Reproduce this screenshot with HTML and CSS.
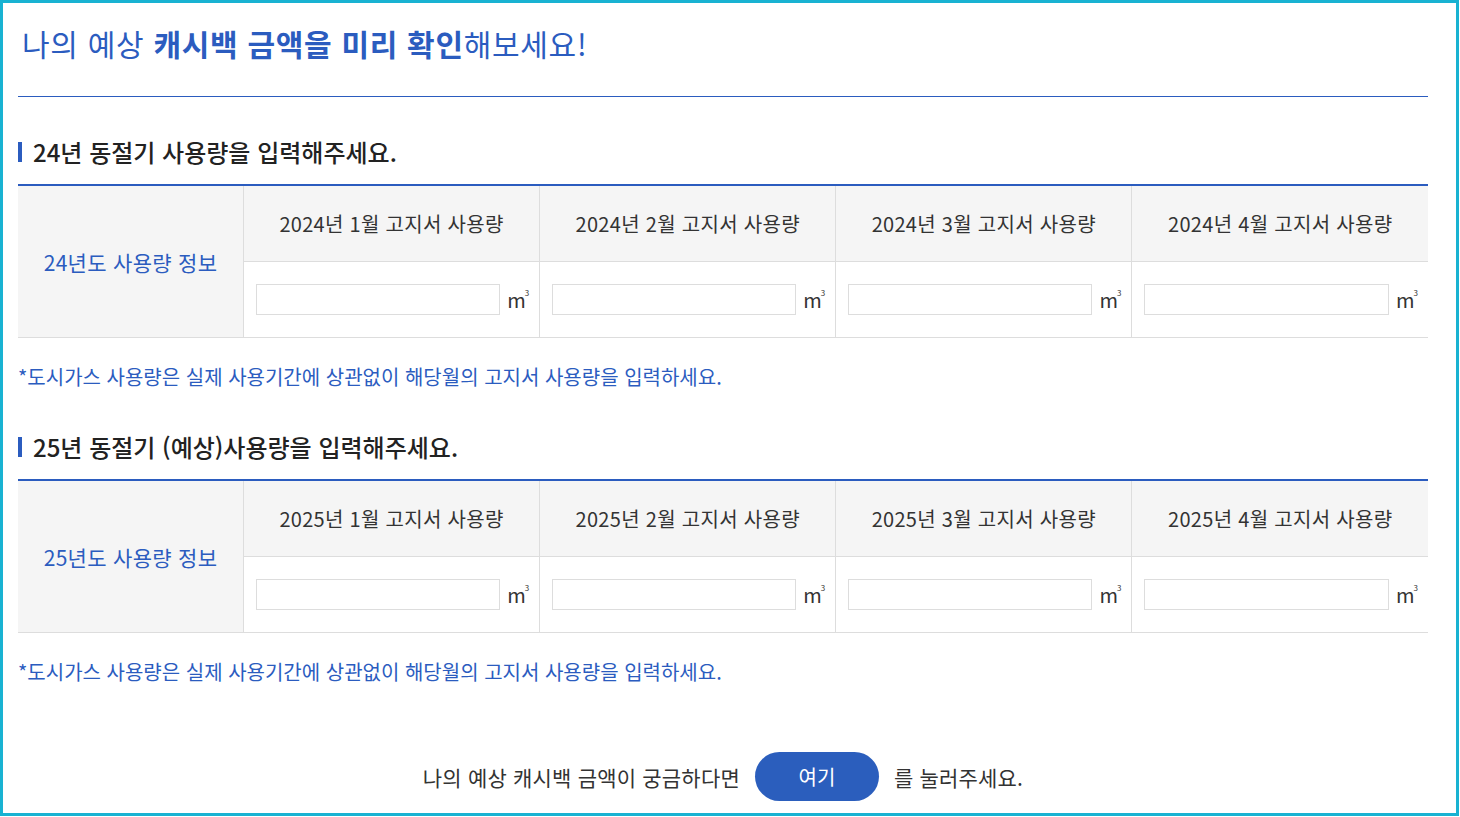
FILE: index.html
```html
<!DOCTYPE html>
<html lang="ko">
<head>
  <meta charset="UTF-8">
  <meta name="viewport" content="width=device-width, initial-scale=1.0">
  <title>예상 캐시백 확인</title>
  <link rel="stylesheet" href="styles.css">
</head>
<body>

  <div class="frame">
    <div class="title-box">
      <h1>나의 예상 <strong>캐시백 금액을 미리 확인</strong>해보세요!</h1>
    </div>

    <h2 class="sec-title">24년 동절기 사용량을 입력해주세요.</h2>
    <table class="usage-table">
      <tr>
        <th class="year-cell" rowspan="2">24년도 사용량 정보</th>
        <th>2024년 1월 고지서 사용량</th>
        <th>2024년 2월 고지서 사용량</th>
        <th>2024년 3월 고지서 사용량</th>
        <th>2024년 4월 고지서 사용량</th>
      </tr>
      <tr>
        <td><div class="field"><input type="text"><span class="unit">m<sup>3</sup></span></div></td>
        <td><div class="field"><input type="text"><span class="unit">m<sup>3</sup></span></div></td>
        <td><div class="field"><input type="text"><span class="unit">m<sup>3</sup></span></div></td>
        <td><div class="field"><input type="text"><span class="unit">m<sup>3</sup></span></div></td>
      </tr>
    </table>
    <p class="note">*도시가스 사용량은 실제 사용기간에 상관없이 해당월의 고지서 사용량을 입력하세요.</p>

    <h2 class="sec-title">25년 동절기 (예상)사용량을 입력해주세요.</h2>
    <table class="usage-table">
      <tr>
        <th class="year-cell" rowspan="2">25년도 사용량 정보</th>
        <th>2025년 1월 고지서 사용량</th>
        <th>2025년 2월 고지서 사용량</th>
        <th>2025년 3월 고지서 사용량</th>
        <th>2025년 4월 고지서 사용량</th>
      </tr>
      <tr>
        <td><div class="field"><input type="text"><span class="unit">m<sup>3</sup></span></div></td>
        <td><div class="field"><input type="text"><span class="unit">m<sup>3</sup></span></div></td>
        <td><div class="field"><input type="text"><span class="unit">m<sup>3</sup></span></div></td>
        <td><div class="field"><input type="text"><span class="unit">m<sup>3</sup></span></div></td>
      </tr>
    </table>
    <p class="note">*도시가스 사용량은 실제 사용기간에 상관없이 해당월의 고지서 사용량을 입력하세요.</p>

    <div class="action-row">
      <span>나의 예상 캐시백 금액이 궁금하다면</span>
      <button class="go-btn">여기</button>
      <span>를 눌러주세요.</span>
    </div>
  </div>

</body>
</html>
```

FILE: styles.css
```css
body {
  margin: 0;
  font-family: 'Noto Sans CJK KR', 'Noto Sans', sans-serif;
  color: #333;
  background-color: #fff;
}

.frame {
  box-sizing: border-box;
  width: 1459px;
  height: 816px;
  border: 3px solid #18b2d2;
  padding: 0 28px 0 15px;
}

.title-box {
  height: 93px;
  border-bottom: 1px solid #2b5cbf;
}

h1 {
  margin: 0;
  padding: 20px 0 0 4px;
  font-size: 30px;
  line-height: 40px;
  font-weight: 400;
  color: #2b5cbf;
  letter-spacing: 0.7px;
}

  h1 strong {
    font-weight: 700;
  }

.sec-title {
  display: flex;
  align-items: center;
  margin: 40px 0 17px;
  font-size: 24px;
  line-height: 30px;
  font-weight: 500;
  color: #222;
}

  .sec-title::before {
    content: "";
    width: 4px;
    height: 20px;
    margin-right: 11px;
    background-color: #2b5cbf;
  }

.usage-table {
  width: 100%;
  border-collapse: collapse;
  table-layout: fixed;
  border-top: 2px solid #2b5cbf;
}

  .usage-table th,
  .usage-table td {
    height: 75px;
    padding: 0;
    border: 1px solid #ddd;
    border-top: none;
    text-align: center;
    vertical-align: middle;
  }

  .usage-table th {
    background-color: #f5f5f5;
    font-size: 20px;
    font-weight: 400;
    color: #333;
    letter-spacing: 0.3px;
  }

  .usage-table tr > :first-child {
    border-left: none;
  }

  .usage-table tr > :last-child {
    border-right: none;
  }

  .usage-table .year-cell {
    width: 225px;
    font-size: 21px;
    color: #2b5cbf;
    border-left: none;
  }

.field {
  display: flex;
  align-items: center;
  gap: 7px;
  padding: 0 12px;
}

  .field input {
    box-sizing: border-box;
    flex: 1;
    min-width: 0;
    height: 31px;
    border: 1px solid #ddd;
    padding: 0 8px;
    font-size: 16px;
  }

.unit {
  font-size: 20px;
  color: #333;
  width: 20px;
  text-align: left;
}

  .unit sup {
    font-size: 8px;
    vertical-align: 12px;
    margin-left: -1px;
  }

.note {
  margin: 24px 0 0;
  font-size: 20px;
  line-height: 30px;
  color: #2b5cbf;
}

.action-row {
  display: flex;
  justify-content: center;
  align-items: center;
  gap: 15px;
  margin-top: 65px;
  font-size: 21px;
  color: #333;
  letter-spacing: 0.2px;
}

.go-btn {
  width: 124px;
  height: 49px;
  border: none;
  border-radius: 25px;
  background-color: #2b5ebd;
  color: #fff;
  font-family: inherit;
  font-size: 20px;
  cursor: pointer;
}
```
